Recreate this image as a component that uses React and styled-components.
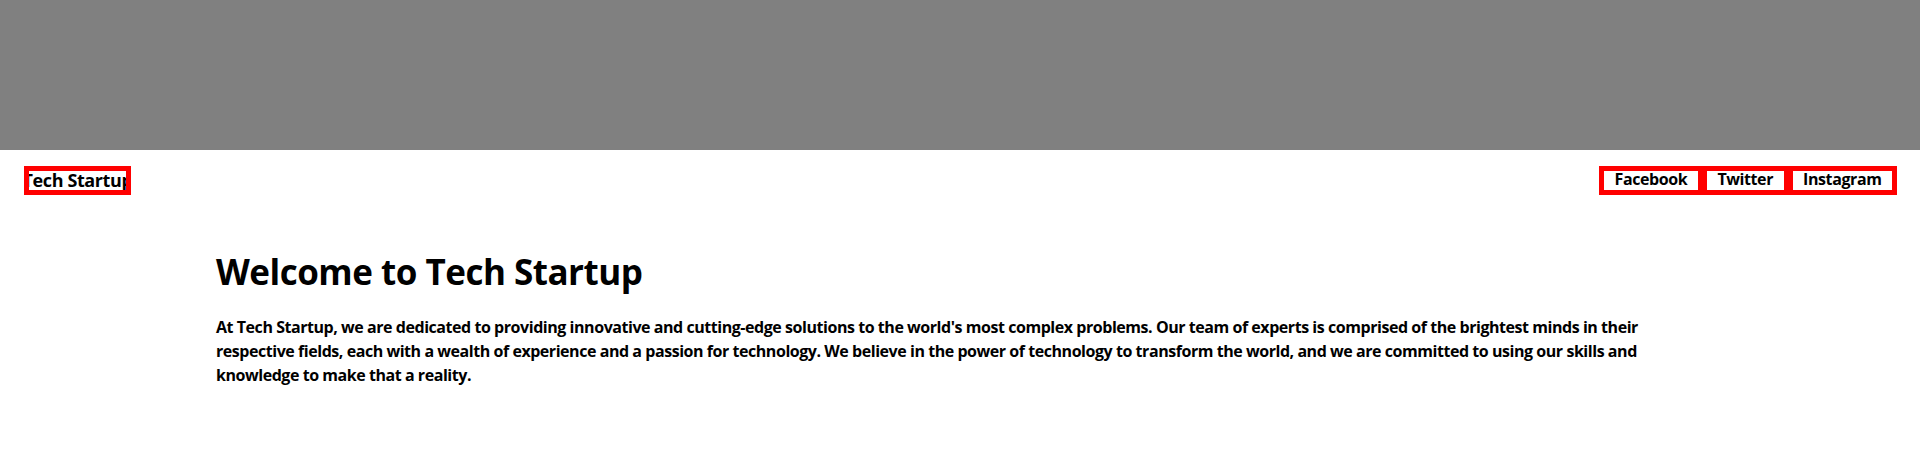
import React from "react";
import styled, { createGlobalStyle } from "styled-components";

const GlobalStyle = createGlobalStyle`
  *,
  *:before,
  *:after {
    box-sizing: border-box;
  }
  body {
    margin: 0;
    font-family: "Open Sans", "Noto Sans", sans-serif;
    font-weight: 700;
    color: #000;
    background: #fff;
  }
`;

const Banner = styled.div`
  height: 150px;
  background: #808080;
`;

const Header = styled.header`
  display: flex;
  justify-content: space-between;
  align-items: flex-start;
  padding: 16px 23px 0 24px;
`;

const Logo = styled.div`
  display: flex;
  justify-content: center;
  width: 107px;
  height: 29px;
  border: 5px solid #ff0000;
  overflow: hidden;
  font-size: 18px;
  line-height: 18px;
  white-space: nowrap;
  letter-spacing: -0.4px;
`;

const Nav = styled.nav`
  display: flex;
  gap: 9px;
  padding: 5px;
  background: #ff0000;
`;

const NavLink = styled.a`
  display: block;
  height: 19px;
  padding: 0 10.5px;
  background: #fff;
  color: #000;
  font-size: 16px;
  line-height: 17px;
  letter-spacing: -0.4px;
  text-decoration: none;
`;

const Main = styled.main`
  max-width: 1488px;
  margin: 54px auto 0;
`;

const Title = styled.h1`
  margin: 0 0 20px;
  font-size: 35px;
  line-height: 46px;
  letter-spacing: -0.5px;
`;

const Intro = styled.p`
  margin: 0;
  font-size: 16px;
  line-height: 24px;
  letter-spacing: -0.45px;
`;

const links = ["Facebook", "Twitter", "Instagram"];

export default function App() {
  return (
    <>
      <GlobalStyle />
      <Banner />
      <Header>
        <Logo>Tech Startup</Logo>
        <Nav>
          {links.map((l) => (
            <NavLink key={l} href="#">
              {l}
            </NavLink>
          ))}
        </Nav>
      </Header>
      <Main>
        <Title>Welcome to Tech Startup</Title>
        <Intro>
          At Tech Startup, we are dedicated to providing innovative and
          cutting-edge solutions to the world's most complex problems. Our team
          of experts is comprised of the brightest minds in their respective
          fields, each with a wealth of experience and a passion for technology.
          We believe in the power of technology to transform the world, and we
          are committed to using our skills and knowledge to make that a
          reality.
        </Intro>
      </Main>
    </>
  );
}
